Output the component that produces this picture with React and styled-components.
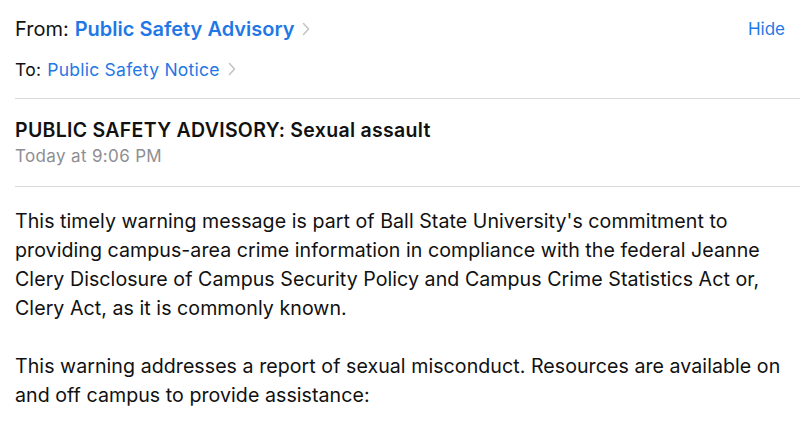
import React from "react";
import styled, { createGlobalStyle } from "styled-components";

const Global = createGlobalStyle`
  html, body { margin: 0; padding: 0; background: #fff; }
  body { font-family: Inter, "Noto Sans", sans-serif; color: #111; -webkit-font-smoothing: antialiased; }
`;

const Page = styled.div`
  width: 800px;
  height: 434px;
  overflow: hidden;
  padding-left: 15px;
  box-sizing: border-box;
`;

const Header = styled.div`
  padding-right: 15px;
  height: 99px;
  box-sizing: border-box;
  padding-top: 14px;
  border-bottom: 1px solid #d9d9dc;
  display: flex;
  flex-direction: column;
`;

const Row = styled.div`
  display: flex;
  align-items: center;
  height: ${(p) => p.$h}px;
  font-size: ${(p) => p.$size}px;
  letter-spacing: ${(p) => p.$ls || 0}px;
  gap: 6px;
`;

const Label = styled.span`
  color: #111;
`;

const Name = styled.span`
  color: #1f78e6;
  font-weight: ${(p) => (p.$bold ? 600 : 400)};
`;

const Chevron = styled.svg`
  width: 8px;
  height: 14px;
  margin-left: 2px;
`;

const Hide = styled.span`
  margin-left: auto;
  color: #1f78e6;
  font-size: 17px;
  letter-spacing: 0;
`;

const Subject = styled.div`
  height: 88px;
  box-sizing: border-box;
  padding-top: 18px;
  border-bottom: 1px solid #d9d9dc;
`;

const Title = styled.div`
  font-size: 19.5px;
  font-weight: 600;
  letter-spacing: 0.3px;
  color: #111;
  line-height: 27px;
`;

const DateLine = styled.div`
  font-size: 17px;
  letter-spacing: 0.35px;
  color: #8e8e93;
  line-height: 24px;
`;

const Body = styled.div`
  padding: 20px 0 0 0;
  font-size: 19.6px;
  letter-spacing: 0.05px;
  line-height: 29px;
  color: #111;
  white-space: nowrap;
`;

const Para = styled.p`
  margin: 0 0 29px 0;
`;

const Chev = () => (
  <Chevron viewBox="0 0 8 14">
    <path d="M1.5 1.5 L6.5 7 L1.5 12.5" fill="none" stroke="#c4c4c8" strokeWidth="1.6" strokeLinecap="round" strokeLinejoin="round" />
  </Chevron>
);

export default function App() {
  return (
    <>
      <Global />
      <Page>
        <Header>
          <Row $h={30} $size={20}>
            <Label>From:</Label>
            <Name $bold>Public Safety Advisory</Name>
            <Chev />
            <Hide>Hide</Hide>
          </Row>
          <Row $h={50} $size={17.5} $ls={0.25}>
            <Label>To:</Label>
            <Name>Public Safety Notice</Name>
            <Chev />
          </Row>
        </Header>
        <Subject>
          <Title>PUBLIC SAFETY ADVISORY: Sexual assault</Title>
          <DateLine>Today at 9:06 PM</DateLine>
        </Subject>
        <Body>
          <Para>
            This timely warning message is part of Ball State University's commitment to
            <br />
            providing campus-area crime information in compliance with the federal Jeanne
            <br />
            Clery Disclosure of Campus Security Policy and Campus Crime Statistics Act or,
            <br />
            Clery Act, as it is commonly known.
          </Para>
          <Para>
            This warning addresses a report of sexual misconduct. Resources are available on
            <br />
            and off campus to provide assistance:
          </Para>
        </Body>
      </Page>
    </>
  );
}
